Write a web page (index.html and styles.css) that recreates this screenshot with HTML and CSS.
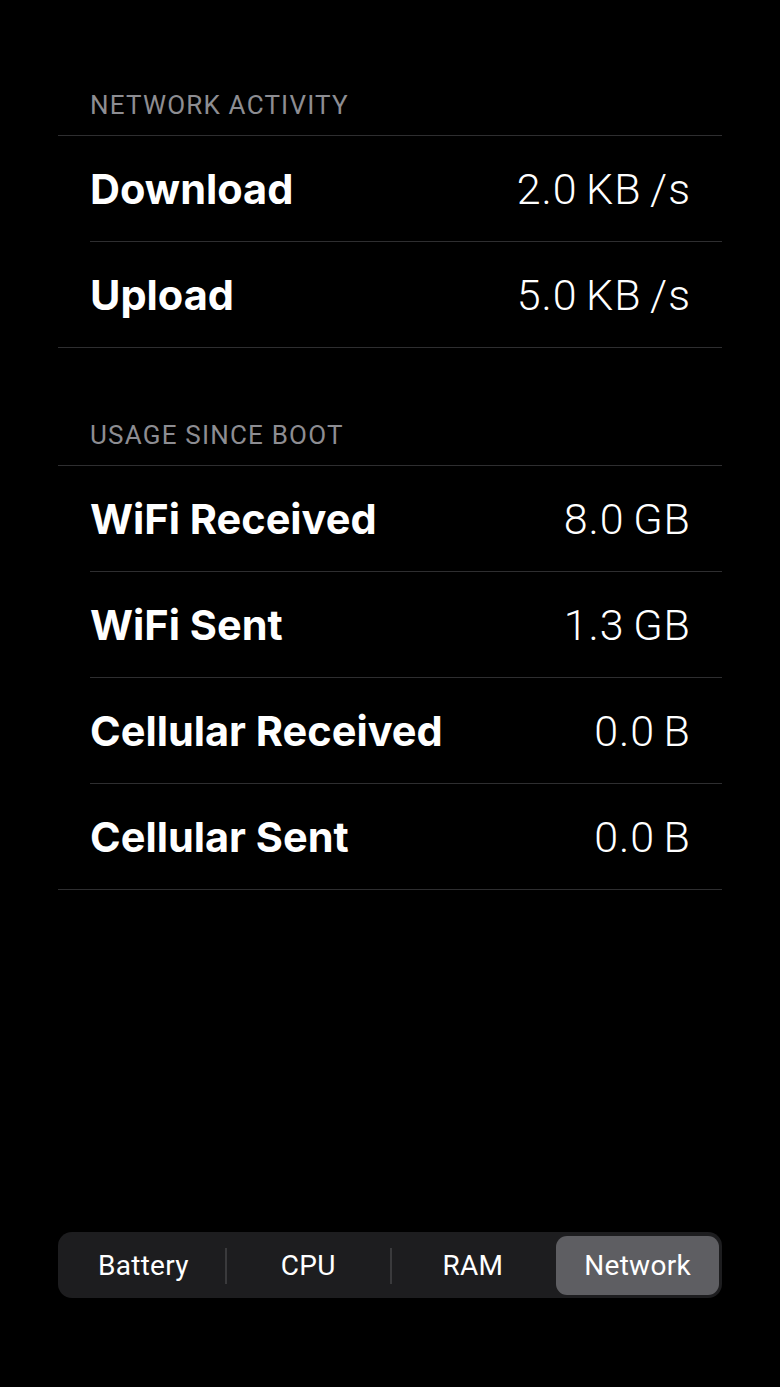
FILE: index.html
```html
<!DOCTYPE html>
<html lang="en">
<head>
    <meta charset="UTF-8">
    <meta name="viewport" content="width=device-width, initial-scale=1.0">
    <title>Network</title>
    <link rel="stylesheet" href="styles.css">
</head>
<body>
    <div class="page">

        <div class="section first">
            <h3 class="section-title">NETWORK ACTIVITY</h3>
            <div class="list">
                <div class="row"><div class="row-inner"><span class="label">Download</span><span class="value">2.0 KB /s</span></div></div>
                <div class="row"><div class="row-inner"><span class="label">Upload</span><span class="value">5.0 KB /s</span></div></div>
            </div>
        </div>

        <div class="section">
            <h3 class="section-title">USAGE SINCE BOOT</h3>
            <div class="list">
                <div class="row"><div class="row-inner"><span class="label">WiFi Received</span><span class="value">8.0 GB</span></div></div>
                <div class="row"><div class="row-inner"><span class="label">WiFi Sent</span><span class="value">1.3 GB</span></div></div>
                <div class="row"><div class="row-inner"><span class="label">Cellular Received</span><span class="value">0.0 B</span></div></div>
                <div class="row"><div class="row-inner"><span class="label">Cellular Sent</span><span class="value">0.0 B</span></div></div>
            </div>
        </div>

        <div class="spacer"></div>

        <div class="tabs">
            <div class="tab">Battery</div>
            <div class="tab-sep"></div>
            <div class="tab">CPU</div>
            <div class="tab-sep"></div>
            <div class="tab">RAM</div>
            <div class="tab-sep hidden"></div>
            <div class="tab active">Network</div>
        </div>

    </div>
</body>
</html>
```

FILE: styles.css
```css
*{
    margin: 0;
    padding: 0;
    box-sizing: border-box;
}
body{
    background-color: #000;
    color: #fff;
    font-family: Roboto, "Liberation Sans", sans-serif;
}
.page{
    display: flex;
    flex-direction: column;
    height: 1387px;
    padding: 0 58px 89px 58px;
}
.section{
    margin-top: 72px;
}
.section.first{
    margin-top: 90px;
}
.section-title{
    font-family: Roboto, sans-serif;
    font-weight: 400;
    font-size: 26px;
    line-height: 30px;
    color: #8d8d92;
    padding: 0 32px 15px 32px;
    letter-spacing: 1.2px;
}
.list{
    border-top: 1px solid #2e2e30;
    border-bottom: 1px solid #2e2e30;
}
.row{
    padding-left: 32px;
}
.row-inner{
    height: 106px;
    display: flex;
    align-items: center;
    justify-content: space-between;
    padding-right: 32px;
    border-bottom: 1px solid #2e2e30;
}
.row:last-child .row-inner{
    border-bottom: none;
    height: 105px;
}
.label{
    font-family: Inter, sans-serif;
    font-weight: 700;
    font-size: 41.5px;
}
.value{
    font-family: Roboto, sans-serif;
    font-weight: 300;
    font-size: 43px;
    letter-spacing: 1px;
    word-spacing: -3px;
    margin-right: -1px;
}
.spacer{
    flex: 1;
}
.tabs{
    display: flex;
    align-items: center;
    height: 66px;
    padding: 4px 3px 3px 4px;
    background-color: #1d1d1f;
    border-radius: 14px;
}
.tab{
    flex: 1;
    height: 100%;
    display: flex;
    align-items: center;
    justify-content: center;
    font-family: Roboto, sans-serif;
    font-size: 28px;
    letter-spacing: 0.3px;
    color: #fff;
    border-radius: 11px;
}
.tab.active{
    background-color: #5e5e62;
}
.tab-sep{
    width: 2px;
    height: 36px;
    background-color: #3a3a3c;
}
.tab-sep.hidden{
    background-color: transparent;
}
```
